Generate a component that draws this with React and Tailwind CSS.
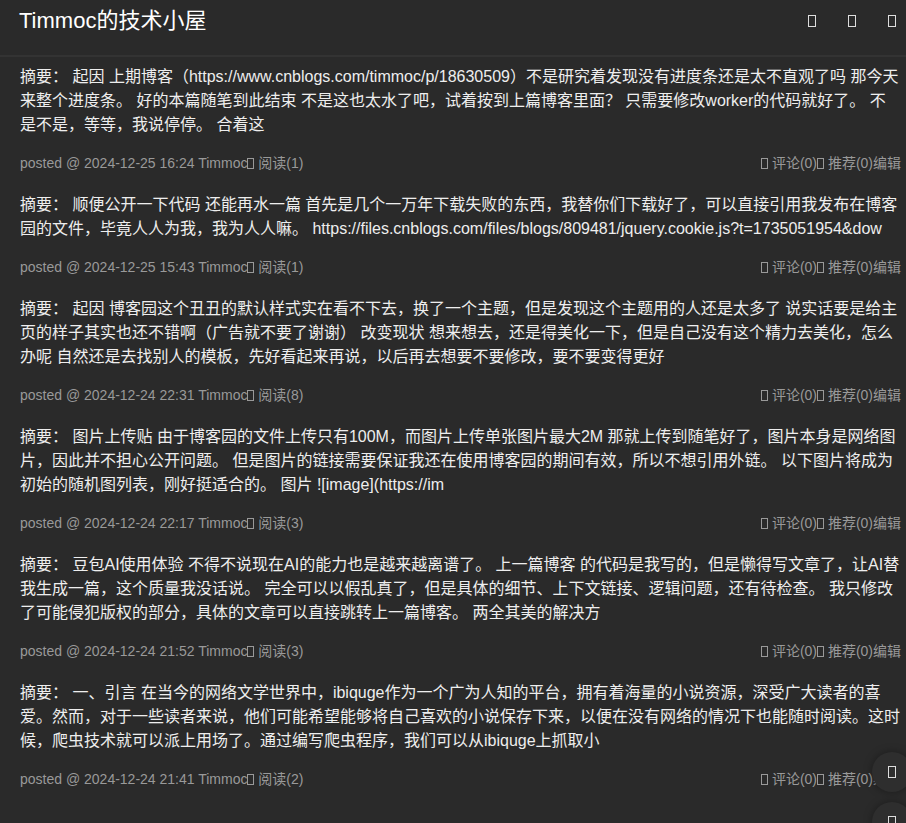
import React from 'react';

const posts = [
    {
        summary: '起因 上期博客（https://www.cnblogs.com/timmoc/p/18630509）不是研究着发现没有进度条还是太不直观了吗 那今天来整个进度条。 好的本篇随笔到此结束 不是这也太水了吧，试着按到上篇博客里面？ 只需要修改worker的代码就好了。 不是不是，等等，我说停停。 合着这',
        date: '2024-12-25 16:24',
        reads: 1,
    },
    {
        summary: '顺便公开一下代码 还能再水一篇 首先是几个一万年下载失败的东西，我替你们下载好了，可以直接引用我发布在博客园的文件，毕竟人人为我，我为人人嘛。 https://files.cnblogs.com/files/blogs/809481/jquery.cookie.js?t=1735051954&dow',
        date: '2024-12-25 15:43',
        reads: 1,
    },
    {
        summary: '起因 博客园这个丑丑的默认样式实在看不下去，换了一个主题，但是发现这个主题用的人还是太多了 说实话要是给主页的样子其实也还不错啊（广告就不要了谢谢） 改变现状 想来想去，还是得美化一下，但是自己没有这个精力去美化，怎么办呢 自然还是去找别人的模板，先好看起来再说，以后再去想要不要修改，要不要变得更好',
        date: '2024-12-24 22:31',
        reads: 8,
    },
    {
        summary: '图片上传贴 由于博客园的文件上传只有100M，而图片上传单张图片最大2M 那就上传到随笔好了，图片本身是网络图片，因此并不担心公开问题。 但是图片的链接需要保证我还在使用博客园的期间有效，所以不想引用外链。 以下图片将成为初始的随机图列表，刚好挺适合的。 图片 ![image](https://im',
        date: '2024-12-24 22:17',
        reads: 3,
    },
    {
        summary: '豆包AI使用体验 不得不说现在AI的能力也是越来越离谱了。 上一篇博客 的代码是我写的，但是懒得写文章了，让AI替我生成一篇，这个质量我没话说。 完全可以以假乱真了，但是具体的细节、上下文链接、逻辑问题，还有待检查。 我只修改了可能侵犯版权的部分，具体的文章可以直接跳转上一篇博客。 两全其美的解决方',
        date: '2024-12-24 21:52',
        reads: 3,
    },
    {
        summary: '一、引言 在当今的网络文学世界中，ibiquge作为一个广为人知的平台，拥有着海量的小说资源，深受广大读者的喜爱。然而，对于一些读者来说，他们可能希望能够将自己喜欢的小说保存下来，以便在没有网络的情况下也能随时阅读。这时候，爬虫技术就可以派上用场了。通过编写爬虫程序，我们可以从ibiquge上抓取小',
        date: '2024-12-24 21:41',
        reads: 2,
    },
];

// missing icon-font glyph, shown as an empty box
function Tofu({ className = '' }) {
    return <span className={`inline-block w-[7px] h-[11px] border border-current align-[-1px] ${className}`} />;
}

export default function App() {
    return (
        <div className="min-h-screen bg-[#2a2a2a] text-[#eeeeee] font-['Liberation_Sans','Noto_Sans_CJK_SC',sans-serif]">
            {/* Header */}
            <div className="h-[57px] border-b-2 border-[#333333] flex items-start justify-between pl-[19px] pr-[10px] pt-[8px]">
                <h1 className="text-[22px] leading-[26px] text-white">Timmoc的技术小屋</h1>
                <div className="flex items-center gap-8 h-[26px] text-[#dddddd]">
                    <Tofu className="w-[8px] h-[12px]" />
                    <Tofu className="w-[8px] h-[12px]" />
                    <Tofu className="w-[8px] h-[12px]" />
                </div>
            </div>

            {/* Posts */}
            <div className="pl-5 pr-[5px] pt-2">
                {posts.map((p) => (
                    <div key={p.date} className="pb-5">
                        <p className="text-base leading-6">摘要： {p.summary}</p>
                        <div className="mt-4 flex justify-between text-sm leading-5 text-[#999999]">
                            <span>posted @ {p.date} Timmoc<Tofu /> 阅读({p.reads})</span>
                            <span><Tofu /> 评论(0)<Tofu /> 推荐(0)编辑</span>
                        </div>
                    </div>
                ))}
            </div>

            {/* Floating buttons */}
            <div className="fixed right-[-6px] top-[752px] flex flex-col gap-[10px]">
                <button className="w-10 h-10 rounded-full bg-[#2e2e2e] shadow-[0_0_8px_rgba(0,0,0,0.35)] flex items-center justify-center text-[#dddddd]">
                    <Tofu className="w-[8px] h-[12px]" />
                </button>
                <button className="w-10 h-10 rounded-full bg-[#2e2e2e] shadow-[0_0_8px_rgba(0,0,0,0.35)] flex items-center justify-center text-[#dddddd]">
                    <Tofu className="w-[8px] h-[12px]" />
                </button>
            </div>
        </div>
    );
}
